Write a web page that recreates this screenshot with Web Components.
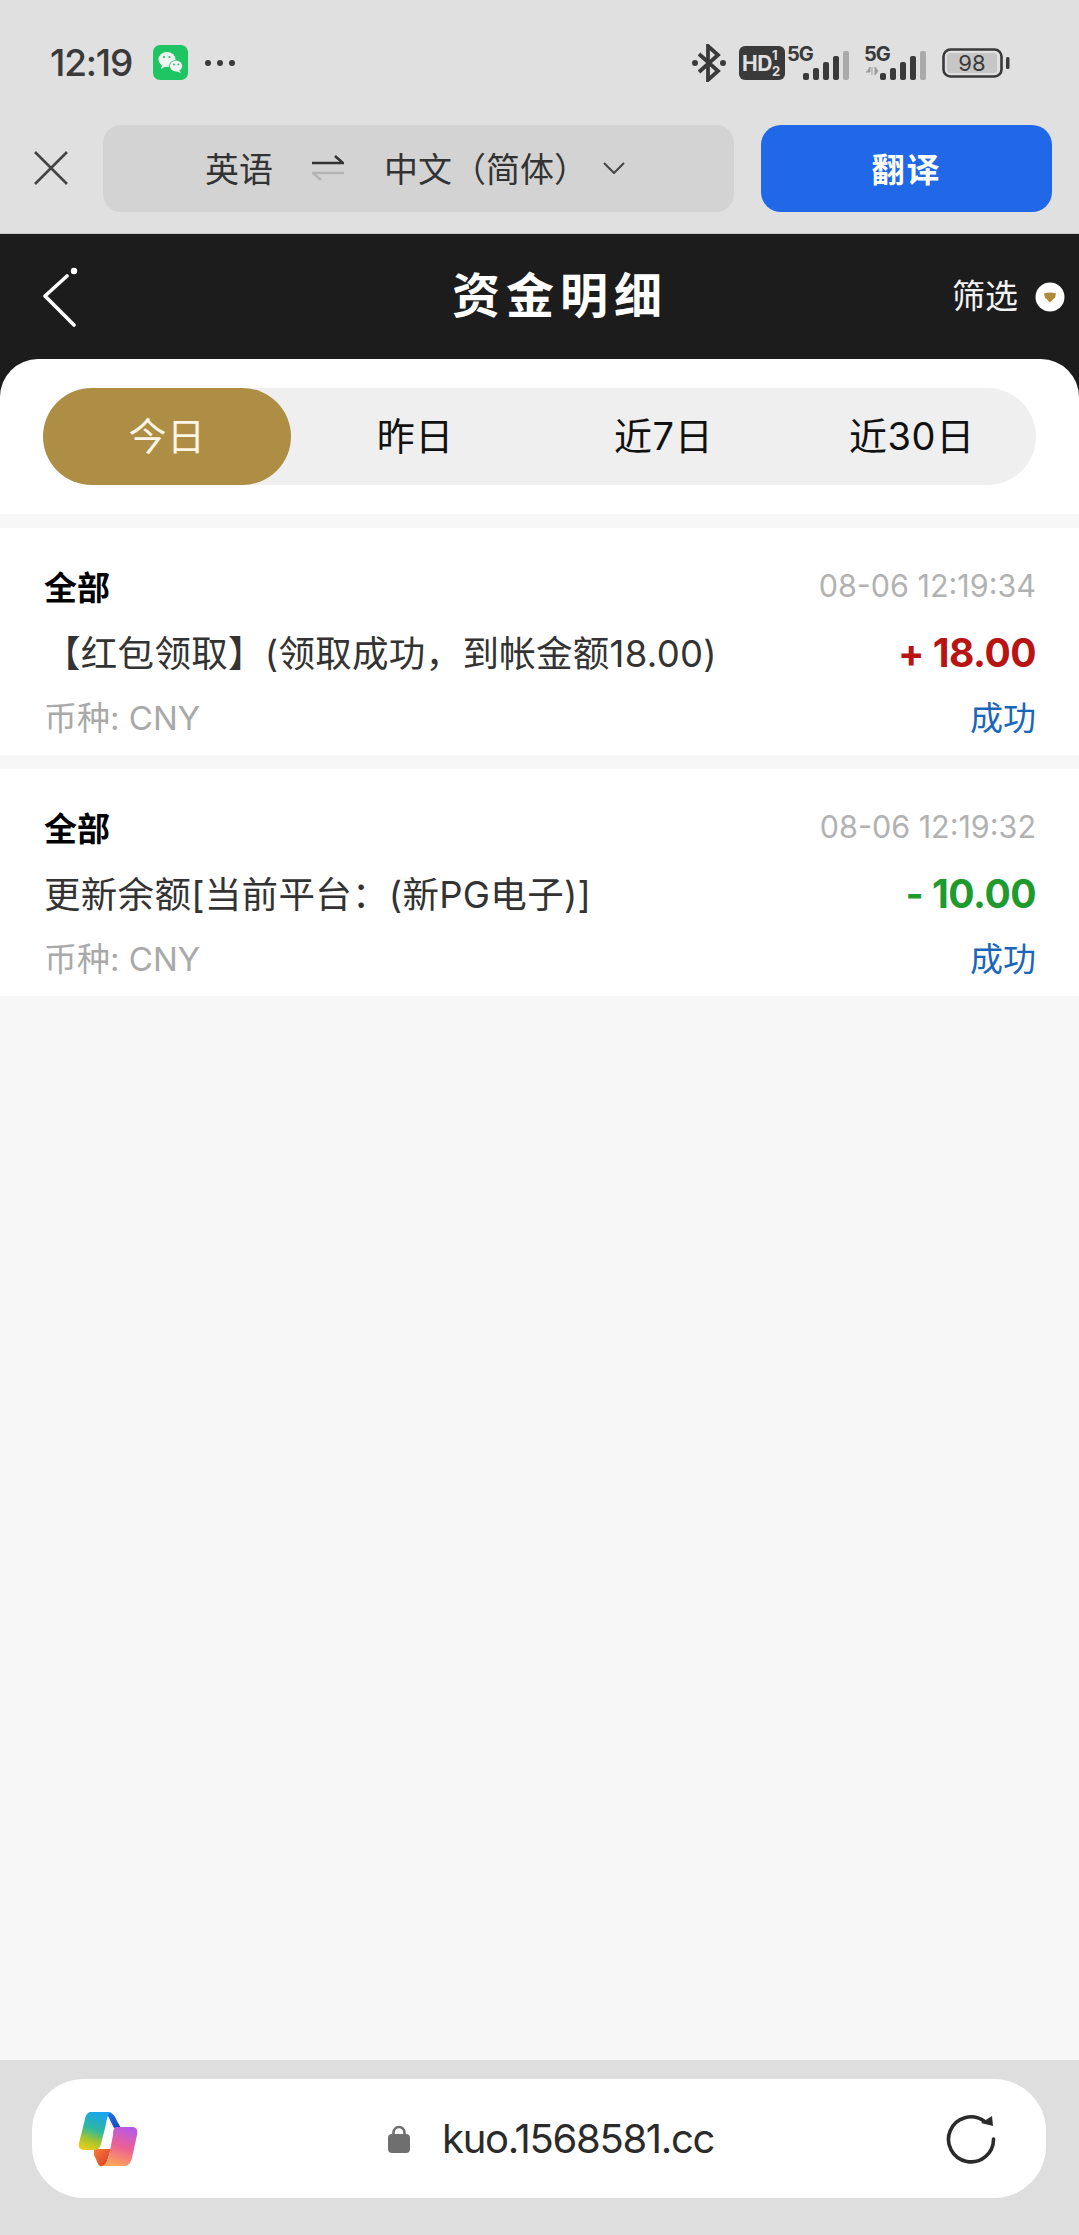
<!DOCTYPE html>
<html lang="zh">
<head>
<meta charset="utf-8">
<title>资金明细</title>
<style>
    html, body { margin: 0; padding: 0; }
    body {
        width: 1079px;
        height: 2235px;
        display: flex;
        flex-direction: column;
        overflow: hidden;
        background: #f7f7f7;
        font-family: Inter, "Noto Sans CJK SC", sans-serif;
    }
    record-list { flex: 1; }
</style>
</head>
<body>
<phone-status></phone-status>
<translate-bar></translate-bar>
<page-header title-text="资金明细" action="筛选"></page-header>
<range-tabs></range-tabs>
<record-list>
    <fund-record kind="全部" time="08-06 12:19:34" amount="+ 18.00" tone="plus" currency="币种: CNY" state="成功">【红包领取】(领取成功，到帐金额18.00)</fund-record>
    <fund-record kind="全部" time="08-06 12:19:32" amount="- 10.00" tone="minus" currency="币种: CNY" state="成功">更新余额[当前平台：(新PG电子)]</fund-record>
</record-list>
<url-bar address="kuo.1568581.cc"></url-bar>

<script>
class PhoneStatus extends HTMLElement {
    constructor() {
        super();
        this.$shadow = this.attachShadow({ mode: 'open' });
    }

    signal(x) {
        // five bars, the last one greyed out
        return `
            <rect x="${x}" y="22" width="6" height="7" rx="2" fill="#3a3a3a"/>
            <rect x="${x + 10}" y="17" width="6" height="12" rx="2" fill="#3a3a3a"/>
            <rect x="${x + 20}" y="11" width="6" height="18" rx="2" fill="#3a3a3a"/>
            <rect x="${x + 30}" y="5" width="6" height="24" rx="2" fill="#3a3a3a"/>
            <rect x="${x + 40}" y="0" width="6" height="29" rx="2" fill="#aaa"/>
        `;
    }

    connectedCallback() {
        this.$shadow.innerHTML = `
            <style>
                :host {
                    display: flex;
                    align-items: center;
                    height: 125px;
                    padding: 0 69px 0 50px;
                    box-sizing: border-box;
                    background: #e0e0e0;
                    color: #3a3a3a;
                }
                .time {
                    font: 500 37px Inter, sans-serif;
                    letter-spacing: -1.2px;
                    width: 103px;
                }
                .dots { display: flex; gap: 6px; margin-left: 17px; }
                .dots i { width: 6px; height: 6px; border-radius: 50%; background: #3a3a3a; }
                .right { display: flex; align-items: center; margin-left: auto; }
                svg { display: block; }
                text { font-family: Inter, sans-serif; font-weight: 700; }
            </style>
            <div class="time">12:19</div>
            <svg width="35" height="35" viewBox="0 0 35 35">
                <rect width="35" height="35" rx="7" fill="#1fc563"/>
                <ellipse cx="14" cy="14.5" rx="8.5" ry="7.5" fill="#f3f3f3"/>
                <path d="M9 20 8 24 13 21z" fill="#f3f3f3"/>
                <ellipse cx="23" cy="21" rx="7" ry="6" fill="#1fc563"/>
                <ellipse cx="23" cy="21" rx="6.2" ry="5.4" fill="#f3f3f3"/>
                <path d="M26 25 28 28 23 26z" fill="#f3f3f3"/>
                <circle cx="11" cy="12" r="1.1" fill="#1fc563"/>
                <circle cx="16.500" cy="12" r="1.1" fill="#1fc563"/>
                <circle cx="21" cy="19.500" r=".9" fill="#1fc563"/>
                <circle cx="25.500" cy="19.500" r=".9" fill="#1fc563"/>
            </svg>
            <div class="dots"><i></i><i></i><i></i></div>
            <div class="right">
                <svg width="36" height="38" viewBox="0 0 36 38" style="margin-right:12px">
                    <path d="M8 10 27 27 17 36V2l10 9L8 28" fill="none" stroke="#3a3a3a" stroke-width="3.8"/>
                    <circle cx="4" cy="19" r="3" fill="#3a3a3a"/>
                    <circle cx="32" cy="19" r="3" fill="#3a3a3a"/>
                </svg>
                <svg width="46" height="34" viewBox="0 0 46 34" style="margin-right:2px">
                    <rect width="46" height="34" rx="6" fill="#3a3a3a"/>
                    <text x="3" y="25" font-size="21" letter-spacing="-.5" fill="#e0e0e0">HD</text>
                    <text x="33" y="14" font-size="13" fill="#e0e0e0">1</text>
                    <text x="33" y="30" font-size="13" fill="#e0e0e0">2</text>
                </svg>
                <svg width="64" height="44" viewBox="0 -4 64 44">
                    <text x="0" y="16" font-size="20" fill="#3a3a3a" letter-spacing="-1">5G</text>
                    <g transform="translate(16 6)">${this.signal(0)}</g>
                </svg>
                <svg width="62" height="44" viewBox="0 -4 62 44" style="margin-left:13px">
                    <text x="0" y="16" font-size="20" fill="#3a3a3a" letter-spacing="-1">5G</text>
                    <path d="M2 27h4v-5l-3 5zM8 22v8M11 22v8l3-4z" fill="#9c9c9c" stroke="#9c9c9c" stroke-width="1"/>
                    <g transform="translate(16 6)">${this.signal(0)}</g>
                </svg>
                <svg width="68" height="30" viewBox="0 0 68 30" style="margin-left:16px;overflow:visible">
                    <rect x="1.500" y="1.500" width="58" height="27" rx="7" fill="none" stroke="#3a3a3a" stroke-width="2.6"/>
                    <rect x="5" y="5" width="50" height="20" rx="3" fill="#c6c6c6"/>
                    <text x="30" y="23" font-size="22" text-anchor="middle" fill="#3a3a3a" style="font-weight:400">98</text>
                    <rect x="64" y="9" width="3.500" height="12" rx="1.500" fill="#3a3a3a"/>
                </svg>
            </div>
        `;
    }
}

class TranslateBar extends HTMLElement {
    constructor() {
        super();
        this.$shadow = this.attachShadow({ mode: 'open' });
    }

    connectedCallback() {
        this.$shadow.innerHTML = `
            <style>
                :host {
                    display: flex;
                    align-items: center;
                    height: 109px;
                    padding: 0 27px 22px 34px;
                    box-sizing: border-box;
                    background: #e0e0e0;
                    border-bottom: 1px solid #c9c9c9;
                    font-family: "Noto Sans CJK SC", sans-serif;
                }
                svg { display: block; flex: none; }
                .lang {
                    width: 631px;
                    height: 87px;
                    margin-left: 35px;
                    border-radius: 18px;
                    background: #d3d3d3;
                    display: flex;
                    align-items: center;
                    padding-left: 102px;
                    box-sizing: border-box;
                    font-size: 34px;
                    color: #333;
                }
                .lang span { margin-bottom: 2px; }
                button {
                    width: 291px;
                    height: 87px;
                    margin-left: auto;
                    border: 0;
                    border-radius: 20px;
                    background: #2068e8;
                    color: #fff;
                    font: 700 33px "Noto Sans CJK SC", sans-serif;
                    letter-spacing: 2px;
                }
            </style>
            <svg width="34" height="34" viewBox="0 0 34 34">
                <path d="M1 1 33 33M33 1 1 33" stroke="#444" stroke-width="2.6" fill="none"/>
            </svg>
            <div class="lang">
                <span>英语</span>
                <svg width="32" height="26" viewBox="0 0 32 26" style="margin:0 40px 0 39px">
                    <path d="M0 8H31L23 1" fill="none" stroke="#333" stroke-width="2.6"/>
                    <path d="M32 18H1L9 25" fill="none" stroke="#b4b4b4" stroke-width="2.6"/>
                </svg>
                <span>中文（简体）</span>
                <svg width="22" height="12" viewBox="0 0 22 12" style="margin-left:15px">
                    <path d="M1 1 11 11 21 1" fill="none" stroke="#444" stroke-width="2"/>
                </svg>
            </div>
            <button>翻译</button>
        `;
    }
}

class PageHeader extends HTMLElement {
    constructor() {
        super();
        this.$shadow = this.attachShadow({ mode: 'open' });
    }

    connectedCallback() {
        this.$shadow.innerHTML = `
            <style>
                :host {
                    display: flex;
                    align-items: center;
                    height: 125px;
                    padding: 0 13px 0 43px;
                    box-sizing: border-box;
                    background: #1c1c1c;
                    color: #fff;
                    font-family: "Noto Sans CJK SC", sans-serif;
                }
                svg { display: block; flex: none; }
                h1 {
                    margin: 0 0 9px 373px;
                    font-size: 48px;
                    font-weight: 700;
                    letter-spacing: 6px;
                    white-space: nowrap;
                }
                .action {
                    margin-left: auto;
                    display: flex;
                    align-items: center;
                    gap: 17px;
                    font-size: 33px;
                    color: #f2f2f2;
                }
                .action span { margin-bottom: 6px; }
            </style>
            <svg width="36" height="62" viewBox="0 0 36 62">
                <path d="M24 10 2 30 31 59" fill="none" stroke="#fff" stroke-width="3.6" stroke-linecap="round" stroke-linejoin="round"/>
                <circle cx="31" cy="5" r="3.2" fill="#fff"/>
            </svg>
            <h1>${this.getAttribute('title-text')}</h1>
            <div class="action">
                <span>${this.getAttribute('action')}</span>
                <svg width="30" height="30" viewBox="0 0 30 30" style="margin-right:1px">
                    <circle cx="15" cy="15" r="14.5" fill="#fff"/>
                    <path d="M9 11.500Q15 9.500 21 11.500L20 15.500 15 20.500 10 15.500z" fill="#b08a35"/>
                </svg>
            </div>
        `;
    }
}

class RangeTabs extends HTMLElement {
    constructor() {
        super();
        this.$shadow = this.attachShadow({ mode: 'open' });
        this.ranges = ['今日', '昨日', '近7日', '近30日'];
    }

    connectedCallback() {
        const items = this.ranges.map((label, index) =>
            `<div class="tab ${index === 0 ? 'active' : ''}">${label}</div>`).join('');

        this.$shadow.innerHTML = `
            <style>
                :host {
                    display: block;
                    background: #1c1c1c;
                    font-family: Inter, "Noto Sans CJK SC", sans-serif;
                }
                .sheet {
                    background: #fff;
                    border-radius: 38px 38px 0 0;
                    padding: 29px 43px;
                }
                .tabs {
                    display: grid;
                    grid-template-columns: repeat(4, 1fr);
                    height: 97px;
                    border-radius: 49px;
                    background: #efefef;
                }
                .tab {
                    display: flex;
                    align-items: center;
                    justify-content: center;
                    padding-bottom: 7px;
                    box-sizing: border-box;
                    font-size: 38px;
                    letter-spacing: .6px;
                    color: #111;
                    border-radius: 49px;
                }
                .active { background: #ae8e45; color: #fbf6e6; }
            </style>
            <div class="sheet"><div class="tabs">${items}</div></div>
        `;
    }
}

class RecordList extends HTMLElement {
    constructor() {
        super();
        this.$shadow = this.attachShadow({ mode: 'open' });
    }

    connectedCallback() {
        this.$shadow.innerHTML = `
            <style>
                :host {
                    display: flex;
                    flex-direction: column;
                    gap: 14px;
                    padding-top: 14px;
                    background: #f7f7f7;
                }
            </style>
            <slot></slot>
        `;
    }
}

class FundRecord extends HTMLElement {
    constructor() {
        super();
        this.$shadow = this.attachShadow({ mode: 'open' });
    }

    connectedCallback() {
        this.$shadow.innerHTML = `
            <style>
                :host {
                    display: grid;
                    grid-template-columns: 1fr auto;
                    grid-auto-rows: 65px;
                    align-items: center;
                    padding: 27px 43px 5px 44px;
                    background: #fff;
                    font-family: Inter, "Noto Sans CJK SC", sans-serif;
                }
                .kind, .time, .currency, .state { margin-bottom: 4px; }
                .kind { font-size: 33px; font-weight: 700; color: #000; }
                .time { font-size: 30.5px; color: #b2b2b2; justify-self: end; }
                .desc { font-size: 36.5px; letter-spacing: .3px; color: #333; white-space: nowrap; margin-bottom: 2px; }
                .amount { font-size: 39px; font-weight: 700; justify-self: end; letter-spacing: -.5px; }
                .plus { color: #b81414; }
                .minus { color: #1e9a2e; }
                .currency { font-size: 33px; color: #a9a9a9; }
                .state { font-size: 33px; color: #1a66b8; justify-self: end; }
            </style>
            <div class="kind">${this.getAttribute('kind')}</div>
            <div class="time">${this.getAttribute('time')}</div>
            <div class="desc"><slot></slot></div>
            <div class="amount ${this.getAttribute('tone')}">${this.getAttribute('amount')}</div>
            <div class="currency">${this.getAttribute('currency')}</div>
            <div class="state">${this.getAttribute('state')}</div>
        `;
    }
}

class UrlBar extends HTMLElement {
    constructor() {
        super();
        this.$shadow = this.attachShadow({ mode: 'open' });
    }

    connectedCallback() {
        this.$shadow.innerHTML = `
            <style>
                :host {
                    display: block;
                    height: 175px;
                    padding: 19px 33px 0 32px;
                    box-sizing: border-box;
                    background: #dedede;
                }
                .pill {
                    height: 119px;
                    border-radius: 52px;
                    background: #fff;
                    display: flex;
                    align-items: center;
                    padding: 0 50px 0 46px;
                }
                svg { display: block; flex: none; }
                .addr {
                    margin-left: 32px;
                    font: 400 40px Inter, sans-serif;
                    letter-spacing: -1.3px;
                    color: #2b2b2b;
                }
            </style>
            <div class="pill">
                <svg width="60" height="56" viewBox="0 0 60 56">
                    <defs>
                        <linearGradient id="cl" x1="0.6" y1="0" x2="0.3" y2="1">
                            <stop offset="0" stop-color="#1ba4f0"/>
                            <stop offset=".45" stop-color="#2cb8a0"/>
                            <stop offset=".75" stop-color="#a6c62c"/>
                            <stop offset="1" stop-color="#e8cb1e"/>
                        </linearGradient>
                        <linearGradient id="cr" x1="0.7" y1="0" x2="0.4" y2="1">
                            <stop offset="0" stop-color="#b65ae6"/>
                            <stop offset=".5" stop-color="#ec5f94"/>
                            <stop offset="1" stop-color="#fca55a"/>
                        </linearGradient>
                        <linearGradient id="ct" x1="0" y1="0" x2="1" y2="1">
                            <stop offset="0" stop-color="#1e7ee0"/>
                            <stop offset="1" stop-color="#1a3fc0"/>
                        </linearGradient>
                        <linearGradient id="cb" x1="0" y1="0" x2="1" y2="1">
                            <stop offset="0" stop-color="#fb7a38"/>
                            <stop offset="1" stop-color="#d63a28"/>
                        </linearGradient>
                    </defs>
                    <path d="M28 1C35 1 37 5 39 10L43 17H36L30 5z" fill="url(#ct)"/>
                    <path d="M16 38H33L29 50C28 54 25 56 22 55C20 54 19 50 16 44z" fill="url(#cb)"/>
                    <path d="M13 1H33C30 3 29 7 28 13L23 33C22 37 20 39 15 39H6C2 39 0 36 1 32L7 8C8 3 10 1 13 1z" fill="url(#cl)"/>
                    <path d="M38 16H54C58 16 60 18 59 24L54 47C53 52 50 55 46 55H24C28 54 29 50 31 45L35 24C35 19 36 17 38 16z" fill="url(#cr)"/>
                </svg>
                <svg width="22" height="28" viewBox="0 0 22 28" style="margin-left:250px">
                    <path d="M5.500 11V7.500a5.500 5.500 0 0 1 11 0V11" fill="none" stroke="#6f6f6f" stroke-width="2.6"/>
                    <rect y="9" width="22" height="19" rx="4" fill="#6f6f6f"/>
                </svg>
                <span class="addr">${this.getAttribute('address')}</span>
                <svg width="50" height="50" viewBox="0 0 50 50" style="margin-left:auto">
                    <path d="M38 7A22.500 22.500 0 1 0 47.500 25" fill="none" stroke="#2b2b2b" stroke-width="3.6" stroke-linecap="round"/>
                    <path d="M35 9 47 12 46 2z" fill="#2b2b2b"/>
                </svg>
            </div>
        `;
    }
}

window.customElements.define('phone-status', PhoneStatus);
window.customElements.define('translate-bar', TranslateBar);
window.customElements.define('page-header', PageHeader);
window.customElements.define('range-tabs', RangeTabs);
window.customElements.define('record-list', RecordList);
window.customElements.define('fund-record', FundRecord);
window.customElements.define('url-bar', UrlBar);
</script>
</body>
</html>
